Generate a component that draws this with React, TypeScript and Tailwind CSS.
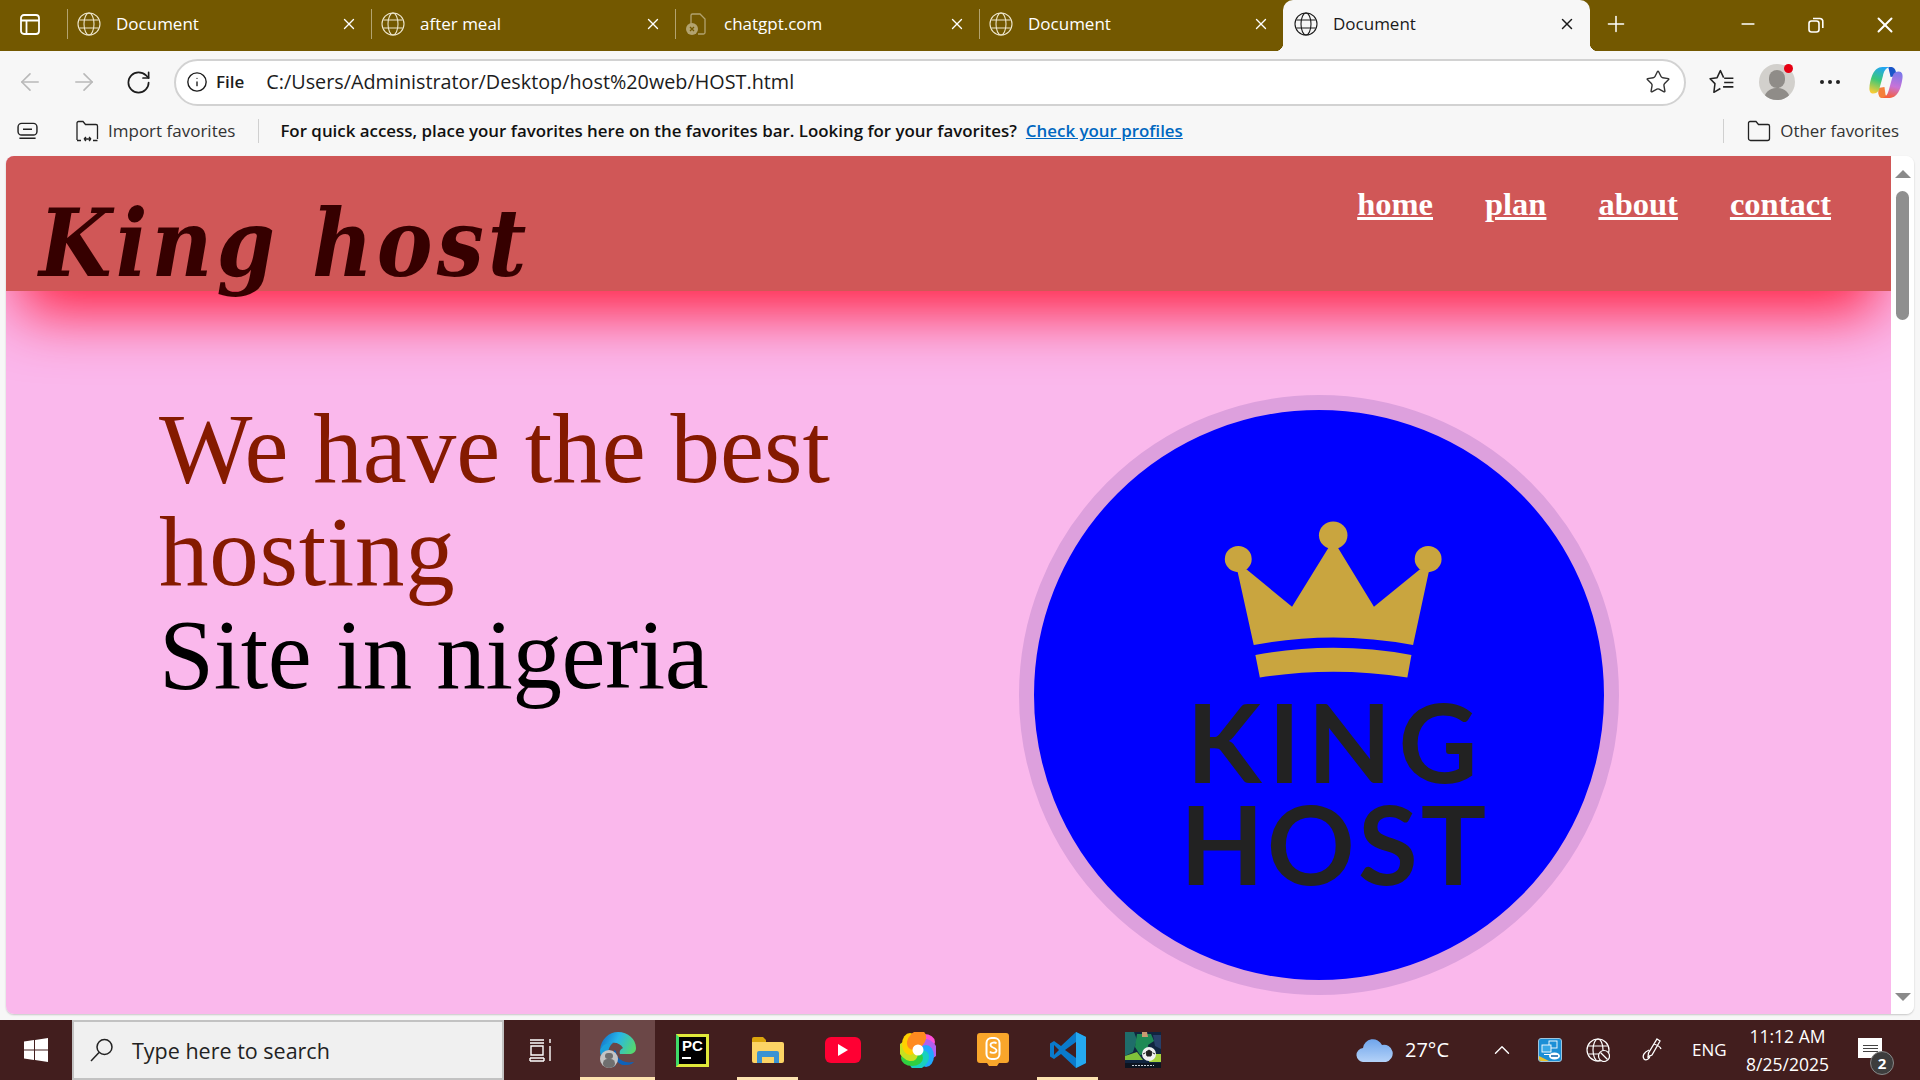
import { X, Plus, Minus, ArrowLeft, ArrowRight, RotateCw, Info, Star, ChevronUp } from "lucide-react";

const tabs = [
	{ title: "Document", icon: "globe" },
	{ title: "after meal", icon: "globe" },
	{ title: "chatgpt.com", icon: "page" },
	{ title: "Document", icon: "globe" },
];

const swirlColors = ["#ff4fd8", "#b060f0", "#20a8ff", "#18d0c0", "#30d040", "#c8e020", "#ffd000", "#ff8a20"];

function GlobeIcon({ className }: { className?: string }) {
	return (
		<svg viewBox="0 0 24 24" fill="none" stroke="currentColor" strokeWidth="1.1" className={className}>
			<circle cx="12" cy="12" r="11" />
			<ellipse cx="12" cy="12" rx="5" ry="11" />
			<path d="M2.2 8h19.6M2.2 16h19.6" />
		</svg>
	);
}

function PageIcon() {
	return (
		<svg viewBox="0 0 24 24" fill="none" className="w-6 h-6 text-[#b3a36f]" stroke="currentColor" strokeWidth="1.3">
			<path d="M6 12V3.5A1.5 1.5 0 0 1 7.5 2H15l5 5v13.5a1.5 1.5 0 0 1-1.5 1.5H13" />
			<circle cx="7" cy="17" r="6" fill="currentColor" stroke="none" />
			<path d="M5 15l4 4M9 15l-4 4" stroke="#735800" />
		</svg>
	);
}

function TabBar() {
	return (
		<div className="h-[51px] bg-[#735800] flex text-white shrink-0">
			<div className="w-[67px] flex items-center pl-5 pb-[3px] shrink-0">
				<svg viewBox="0 0 20 21" fill="none" stroke="white" strokeWidth="1.8" className="w-5 h-[21px]">
					<rect x="1" y="1" width="18" height="19" rx="3" />
					<path d="M1 6.5h18M6.5 6.5V20" />
				</svg>
			</div>
			{tabs.map((t, i) => (
				<div key={i} className="w-[304px] h-[51px] flex items-center relative pl-[10px] pb-[3px] shrink-0">
					<div className="absolute left-0 top-[9px] h-[30px] w-px bg-[#b3a36f]" />
					{t.icon === "globe" ? <GlobeIcon className="w-6 h-6 text-[#eee6cc]" /> : <PageIcon />}
					<span className="ml-[15px] text-[17px]">{t.title}</span>
					<X className="ml-auto mr-[13px] w-[18px] h-[18px]" strokeWidth={1.8} />
				</div>
			))}
			<div className="w-[307px] h-[51px] bg-[#f7f7f7] rounded-t-[10px] flex items-center pl-[11px] pb-[3px] text-[#1a1a1a] relative shrink-0">
				<div className="absolute -left-2 bottom-0 w-2 h-2 bg-[radial-gradient(circle_at_0_0,#735800_8px,#f7f7f7_8.5px)]" />
				<div className="absolute -right-2 bottom-0 w-2 h-2 bg-[radial-gradient(circle_at_100%_0,#735800_8px,#f7f7f7_8.5px)]" />
				<GlobeIcon className="w-6 h-6" />
				<span className="ml-[15px] text-[17px]">Document</span>
				<X className="ml-auto mr-[14px] w-[18px] h-[18px]" strokeWidth={2} />
			</div>
			<Plus className="ml-[13px] mt-[11px] w-[26px] h-[26px]" strokeWidth={1.4} />
			<Minus className="ml-[109px] mt-[14px] w-[20px] h-[20px]" strokeWidth={2} />
			<svg viewBox="0 0 16 16" fill="none" stroke="white" strokeWidth="1.6" className="ml-[50px] mt-[17px] w-4 h-4">
				<rect x="1" y="4" width="10" height="11" rx="2.5" />
				<path d="M5 1.5h6.5A3 3 0 0 1 14.8 5v6" />
			</svg>
			<X className="ml-[48px] mt-[12px] w-[26px] h-[26px]" strokeWidth={1.8} />
		</div>
	);
}

function CopilotIcon() {
	return (
		<svg viewBox="0 0 33 30" preserveAspectRatio="none" className="ml-[29px] w-[34px] h-[33px]">
			<defs>
				<linearGradient id="cpl" x1="0.6" y1="0" x2="0.3" y2="1">
					<stop offset="0" stopColor="#22a6f2" />
					<stop offset="0.5" stopColor="#3cc878" />
					<stop offset="1" stopColor="#f7cc35" />
				</linearGradient>
				<linearGradient id="cpr" x1="0.6" y1="0" x2="0.4" y2="1">
					<stop offset="0" stopColor="#7a78ea" />
					<stop offset="0.55" stopColor="#c873d8" />
					<stop offset="1" stopColor="#f5603a" />
				</linearGradient>
			</defs>
			<path d="M19 1h3c2 0 3.500 2 4 4l1 4-6 1-2-8z" fill="#1a56c8" />
			<path d="M9 20l6-1 1 7 1.500 3H12c-2 0-2.500-2-3-4z" fill="#f5803a" />
			<path d="M13 1H20C16 2 14.500 5 13.500 9L10 21C9 24 7 25 4 25C1 25 0 22 .5 19C1.500 12 4 1 13 1z" fill="url(#cpl)" />
			<path d="M20 29H13C17 28 18.500 25 19.500 21L23 9C24 6 26 5 29 5C32 5 33 8 32.500 11C31.500 18 29 29 20 29z" fill="url(#cpr)" />
		</svg>
	);
}

function AddressRow() {
	return (
		<div className="h-16 flex items-center bg-[#f7f7f7] shrink-0 pb-[2px] text-[#1c1c1c]">
			<ArrowLeft className="ml-4 w-7 h-7 text-[#b9b9b9]" strokeWidth={1.4} />
			<ArrowRight className="ml-[26px] w-7 h-7 text-[#b9b9b9]" strokeWidth={1.4} />
			<RotateCw className="ml-[27px] w-[27px] h-[27px]" strokeWidth={1.5} />
			<div className="ml-[22px] w-[1512px] h-[47px] bg-white rounded-full border-2 border-[#d2d2d2] flex items-center pl-[10px]">
				<Info className="w-[22px] h-[22px]" strokeWidth={1.5} />
				<span className="ml-2 text-[17px] font-semibold">File</span>
				<span className="ml-[22px] text-[19.8px]">C:/Users/Administrator/Desktop/host%20web/HOST.html</span>
				<Star className="ml-auto mr-[13px] w-[26px] h-[26px] text-[#333]" strokeWidth={1.3} />
			</div>
			<svg viewBox="0 0 24 24" fill="none" stroke="#222" strokeWidth="1.4" className="ml-[23px] w-[26px] h-[26px]">
				<path d="M13.500 8L10.500 1.500L7.500 8L1 9L5.500 13.500L4.500 21.500L10.500 18" strokeLinejoin="round" />
				<path d="M14 8.500h8.500M14 12.500h8.500M13 16.500h9.500" />
			</svg>
			<div className="ml-[24px] w-[36px] h-[36px] rounded-full bg-[#d2d0cc] relative overflow-hidden flex justify-center">
				<div className="absolute top-[6px] w-[16px] h-[18px] rounded-full bg-[#8f8c88]" />
				<div className="absolute top-[24px] w-[26px] h-[24px] rounded-full bg-[#8f8c88]" />
			</div>
			<div className="w-[9px] h-[9px] rounded-full bg-[#e60012] -ml-[11px] -mt-[28px] z-10" />
			<div className="ml-[27px] flex gap-[4px]">
				<div className="w-[4px] h-[4px] rounded-full bg-[#222]" />
				<div className="w-[4px] h-[4px] rounded-full bg-[#222]" />
				<div className="w-[4px] h-[4px] rounded-full bg-[#222]" />
			</div>
			<CopilotIcon />
		</div>
	);
}

function FavoritesBar() {
	return (
		<div className="h-[41px] flex items-center bg-[#f7f7f7] text-[17px] text-[#222] pb-[9px] shrink-0">
			<svg viewBox="0 0 24 20" fill="none" stroke="#222" strokeWidth="1.6" className="ml-4 w-[23px] h-[18px]">
				<rect x="1.500" y="1.500" width="21" height="13" rx="4" />
				<path d="M7 8h10M3 18h18" />
			</svg>
			<svg viewBox="0 0 24 24" fill="none" stroke="#222" strokeWidth="1.3" className="ml-[36px] w-6 h-6">
				<path d="M2 21V4a1.500 1.500 0 0 1 1.500-1.500H8l2.500 3H21a1.500 1.500 0 0 1 1.500 1.500v13" />
				<path d="M2 21.500h4M18 21.500h4.500M9 20h7M9 20l2-2M9 20l2 2M16 20l-2-2M16 20l-2 2" />
			</svg>
			<span className="ml-[9px] text-[#333]">Import favorites</span>
			<div className="ml-[23px] w-px h-6 bg-[#d0d0d0]" />
			<span className="ml-[21px] font-semibold text-[16.9px] text-[#111] whitespace-nowrap">For quick access, place your favorites here on the favorites bar. Looking for your favorites?</span>
			<span className="ml-[9px] text-[#0067c0] underline font-semibold text-[16.9px]">Check your profiles</span>
			<div className="ml-auto w-px h-6 bg-[#d0d0d0]" />
			<svg viewBox="0 0 24 22" fill="none" stroke="#222" strokeWidth="1.3" className="ml-[23px] w-6 h-[22px]">
				<path d="M1.500 18.500V3A1.500 1.500 0 0 1 3 1.500h6l2.500 3H21A1.500 1.500 0 0 1 22.500 6v12.500A2 2 0 0 1 20.500 20.500h-17a2 2 0 0 1-2-2z" />
			</svg>
			<span className="ml-[9px] mr-[21px] text-[16.9px] text-[#333]">Other favorites</span>
		</div>
	);
}

function KingLogo() {
	return (
		<div className="w-[600px] h-[600px] rounded-full border-[15px] border-[#dda0dd] bg-[#0000ff] flex flex-col items-center pt-[111px] pl-[28px] shrink-0 overflow-hidden">
			<svg viewBox="0 0 535 396" preserveAspectRatio="none" className="w-[218px] h-[157px] shrink-0" fill="#c9a53f">
				<circle cx="268" cy="36" r="35" />
				<circle cx="35" cy="96" r="33" />
				<circle cx="501" cy="96" r="33" />
				<path d="M33 126L55 122L167 216L256 68H280L368 216L481 122L503 126L464 313Q268 275 73 313Z" />
				<path d="M77 338Q268 302 460 338L450 395Q268 365 88 395Z" />
			</svg>
			<div className="mt-[12px] text-center text-[#222222] font-['Lato',sans-serif] font-bold text-[109px] leading-[102px]">
				<div className="tracking-[7px] pl-[5px]">KING</div>
				<div className="tracking-[3px] pl-[3px]">HOST</div>
			</div>
		</div>
	);
}

function ScrollRail() {
	return (
		<div className="w-[23px] bg-white flex flex-col items-center shrink-0 pt-[14px] pb-[13px]">
			<div className="w-0 h-0 border-l-[8px] border-r-[8px] border-b-[8px] border-l-transparent border-r-transparent border-b-[#8a8a8a]" />
			<div className="mt-[13px] w-[13px] h-[129px] rounded-full bg-[#8f8f8f]" />
			<div className="mt-auto w-0 h-0 border-l-[8px] border-r-[8px] border-t-[8px] border-l-transparent border-r-transparent border-t-[#8a8a8a]" />
		</div>
	);
}

function Page() {
	return (
		<div className="flex-1 bg-[#f7f7f7] px-[6px] pb-[6px] min-h-0">
			<div className="h-full rounded-lg overflow-hidden flex shadow-[0_1px_2px_rgba(0,0,0,0.2)]">
				<div className="flex-1 bg-[#fab8ec] font-['Liberation_Serif',serif] overflow-hidden">
					<header className="h-[135px] bg-[#d05757] relative z-10 shadow-[0_36px_60px_-14px_#ff2040] flex items-start">
						<h1 className="ml-[33px] mt-[28px] text-[#360000] font-bold italic font-['DejaVu_Serif_Condensed','DejaVu_Serif',serif] text-[93px] leading-[120px] tracking-[4px] whitespace-nowrap">King host</h1>
						<nav className="ml-auto mr-[60px] mt-[28px] flex gap-[52px] text-white font-bold text-[32.5px] leading-[40px] underline">
							<span>home</span>
							<span>plan</span>
							<span>about</span>
							<span>contact</span>
						</nav>
					</header>
					<section className="flex items-start pl-[153px] pt-[104px]">
						<div className="w-[860px] shrink-0 text-[99px] leading-[103px] text-[#851a00] pt-[2px]">
							<div>We have the best</div>
							<div className="tracking-[0.7px]">hosting</div>
							<div className="text-black tracking-[-0.4px]">Site in nigeria</div>
						</div>
						<KingLogo />
					</section>
				</div>
				<ScrollRail />
			</div>
		</div>
	);
}

function EdgeIcon() {
	return (
		<div className="relative w-9 h-9">
			<svg viewBox="0 0 36 36" className="w-9 h-9">
				<defs>
					<linearGradient id="edgeTop" x1="0" y1="0.3" x2="1" y2="0.6">
						<stop offset="0" stopColor="#1270c8" />
						<stop offset="0.45" stopColor="#27b6ea" />
						<stop offset="1" stopColor="#55d870" />
					</linearGradient>
				</defs>
				<path d="M0 18C1 7 9 0 18 0c10 0 18 7 18 16 0 4-3 6-7 6h-9c-1-3 1-5 3-6-2-4-7-6-11-5C7 12 2 14 0 18z" fill="url(#edgeTop)" />
				<path d="M0 18C2 13 7 10.500 13 11c-4 3-6 9-4 16 1 3 3 6 6 8C6 34 0 27 0 18z" fill="#1aa0dc" />
				<path d="M14 18c-1 8 4 15 11 15 4 0 7-1 9-3-5 2-9 1-12-1-4-3-6-6-6-10z" fill="#0f62b8" />
				<path d="M14 22c1 6 5 11 11 11 4 0 7-1 9-3-5 1-10 0-13-2-3-1-5-3-7-6z" fill="#0f62b8" />
			</svg>
			<div className="absolute left-0 bottom-0 w-[18px] h-[18px] rounded-full bg-[#c4c4c4] flex flex-col items-center overflow-hidden">
				<div className="w-2 h-2 mt-[3px] rounded-full bg-[#6f6f6f]" />
				<div className="w-3 h-3 rounded-full bg-[#6f6f6f]" />
			</div>
		</div>
	);
}

function PcIcon() {
	return (
		<div className="w-[33px] h-[33px] bg-black border-[3px] border-[#dfe83a] border-l-[#3fdc6a] flex flex-col pl-[3px] text-white font-bold text-[15px] leading-[17px] font-['Liberation_Sans',sans-serif]">
			<span>PC</span>
			<div className="w-[9px] h-[2px] mt-[3px] bg-white" />
		</div>
	);
}

function SwirlIcon() {
	return (
		<svg viewBox="0 0 36 36" className="w-9 h-9">
			{swirlColors.map((c, i) => (
				<ellipse key={c} cx="24" cy="10" rx="11" ry="8" fill={c} transform={`rotate(${i * 45} 18 18)`} />
			))}
			<circle cx="18" cy="18" r="5.500" fill="white" />
		</svg>
	);
}

function ScratchIcon() {
	return (
		<svg viewBox="0 0 32 34" className="w-8 h-[34px]">
			<path d="M3 0h26a3 3 0 0 1 3 3v24a3 3 0 0 1-3 3h-7l-2 3H12l-2-3H3a3 3 0 0 1-3-3V3a3 3 0 0 1 3-3z" fill="#f9a62b" />
			<rect x="9.500" y="5" width="13" height="21" rx="5" fill="none" stroke="white" strokeWidth="2" />
			<path d="M19.500 10.500c-1-1.500-6-1.500-6 1.500s6 2.500 6 5.500-5.500 3-6.500 1" fill="none" stroke="white" strokeWidth="1.800" />
		</svg>
	);
}

function GameThumb() {
	return (
		<svg viewBox="0 0 36 36" className="w-9 h-9">
			<rect width="36" height="36" fill="#10243f" />
			<path d="M0 0h9l3 8-4 12-8 4z" fill="#1f6d6a" />
			<path d="M12 2h14l3 7-6 4 1 8-9 2-5-8z" fill="#1e8a55" />
			<path d="M17 0h5l1 5h-6z" fill="#c99a72" />
			<path d="M28 3h8v14l-6-3z" fill="#27406a" />
			<path d="M0 24l12-4 6 8H0z" fill="#7fc23a" />
			<path d="M26 22h10v8H24z" fill="#a6d23e" />
			<circle cx="24" cy="22" r="7" fill="#f0f0f0" />
			<path d="M24 18l3 2-1 4h-4l-1-4zM18 22l2-1M30 22l-2-1" fill="#222" stroke="#222" />
			<rect y="31" width="36" height="5" fill="#0c1420" />
			<path d="M7 33.500h22" stroke="#c8d0d8" strokeWidth="1.200" strokeDasharray="2 1" />
		</svg>
	);
}

function IntelIcon() {
	return (
		<svg viewBox="0 0 24 24" className="w-6 h-6 shrink-0">
			<rect x="0.500" y="0.500" width="23" height="23" rx="2.500" fill="#1b8fd6" stroke="#9fc4dc" />
			<path d="M1 18l10 5H3a2 2 0 0 1-2-2z" fill="#e6c22f" />
			<rect x="11" y="3" width="8" height="7" fill="none" stroke="white" strokeWidth="0.900" />
			<rect x="4" y="7" width="9" height="7" fill="#38a8e6" stroke="white" strokeWidth="0.900" />
			<path d="M6 16.500h6" stroke="white" />
			<ellipse cx="16.500" cy="18" rx="5.500" ry="3.500" fill="white" />
			<path d="M13 18h7" stroke="#0b5fa5" strokeWidth="1.500" />
		</svg>
	);
}

function TaskSlot({ children, bar, active }: { children: React.ReactNode; bar?: boolean; active?: boolean }) {
	return (
		<div className={`w-[75px] h-[60px] flex items-center justify-center relative shrink-0 ${active ? "bg-[#6b4747]" : ""}`}>
			{children}
			{bar && <div className="absolute bottom-0 left-[7px] right-[7px] h-[3px] bg-[#fde3b0]" />}
			{active && <div className="absolute bottom-0 inset-x-0 h-[3px] bg-[#fde3b0]" />}
		</div>
	);
}

function Taskbar() {
	return (
		<div className="h-[60px] bg-[#421e1e] flex items-center text-white shrink-0 mt-0 font-['Open_Sans',sans-serif]">
			<div className="w-[72px] flex justify-center shrink-0">
				<svg viewBox="0 0 24 24" fill="white" className="w-6 h-6">
					<path d="M0 3.500l10-1.400v9.300H0zM11 2l13-2v11.400H11zM0 12.500h10v9.400L0 20.500zM11 12.500h13V24l-13-2z" />
				</svg>
			</div>
			<div className="w-[432px] h-[60px] bg-[#f0f0f0] border-[2px] border-[#c2c2c2] flex items-center pl-[16px] shrink-0">
				<svg viewBox="0 0 24 24" fill="none" stroke="#222" strokeWidth="1.5" className="w-6 h-6">
					<circle cx="14.500" cy="9" r="7.500" />
					<path d="M9 14.500L1 23" />
				</svg>
				<span className="ml-[18px] mt-[3px] text-[21.5px] text-[#222]">Type here to search</span>
			</div>
			<div className="w-[76px] flex justify-center pr-1 shrink-0">
				<svg viewBox="0 0 24 24" fill="none" stroke="white" strokeWidth="1.4" className="w-6 h-6">
					<path d="M2 2h14M2 5h14M3 8h12v9H3zM2 20h14M2 23h14M2 20v3M16 20v3M22 1v4M22 8v15" />
				</svg>
			</div>
			<TaskSlot active><EdgeIcon /></TaskSlot>
			<TaskSlot><PcIcon /></TaskSlot>
			<TaskSlot bar>
				<svg viewBox="0 0 32 26" className="w-8 h-[26px]">
					<path d="M0 2a2 2 0 0 1 2-2h9l3 3v4H0z" fill="#dba50d" />
					<path d="M0 5h30a2 2 0 0 1 2 2v17a2 2 0 0 1-2 2H2a2 2 0 0 1-2-2z" fill="#fcd465" />
					<path d="M5 26V16a2 2 0 0 1 2-2h18a2 2 0 0 1 2 2v10h-5v-6H10v6z" fill="#3a93d3" />
				</svg>
			</TaskSlot>
			<TaskSlot>
				<div className="w-9 h-[26px] rounded-md bg-[#ff0033] flex items-center justify-center">
					<div className="w-0 h-0 border-y-[6px] border-y-transparent border-l-[10px] border-l-white" />
				</div>
			</TaskSlot>
			<TaskSlot><SwirlIcon /></TaskSlot>
			<TaskSlot><ScratchIcon /></TaskSlot>
			<TaskSlot bar>
				<svg viewBox="0 0 36 36" className="w-9 h-9">
					<path d="M26 0l10 5v26l-10 5L11 22l-7 5-4-2.500v-13L4 9l7 5z" fill="#0a7acb" />
					<path d="M26 0l10 5v26l-10 5z" fill="#25a9f0" />
					<path d="M26 10L15 18l11 8z" fill="#421e1e" />
					<path d="M4 13l5 5-5 5z" fill="#421e1e" />
				</svg>
			</TaskSlot>
			<TaskSlot><GameThumb /></TaskSlot>
			{/* tray */}
			<svg viewBox="0 0 37 24" className="ml-[176px] w-[37px] h-6 shrink-0">
				<defs>
					<linearGradient id="cl" x1="0" y1="0" x2="0" y2="1">
						<stop offset="0" stopColor="#6fa5ec" />
						<stop offset="1" stopColor="#b4d2f8" />
					</linearGradient>
				</defs>
				<path d="M8 24a7 7 0 0 1-1-14 10 10 0 0 1 19-3 8.500 8.500 0 0 1 4 17z" fill="url(#cl)" />
			</svg>
			<span className="ml-[12px] w-[43px] text-[20px] whitespace-nowrap shrink-0">27°C</span>
			<ChevronUp className="ml-[41px] w-[26px] h-[26px] shrink-0" strokeWidth={1.3} />
			<div className="ml-[23px] shrink-0"><IntelIcon /></div>
			<svg viewBox="0 0 24 24" fill="none" stroke="white" strokeWidth="1.2" className="ml-6 w-6 h-6 shrink-0">
				<circle cx="12" cy="12" r="11" />
				<ellipse cx="12" cy="12" rx="5" ry="11" />
				<path d="M2.200 8h19.600M2.200 16h19.600" />
				<circle cx="18" cy="18" r="5.500" fill="#421e1e" />
				<path d="M14.500 14.500l7 7" />
			</svg>
			<svg viewBox="0 0 20 24" fill="none" stroke="white" strokeWidth="1.3" className="ml-8 w-5 h-6 shrink-0">
				<path d="M15 1l3 2-8 14-4 2 .5-4zM12 6c3 1 6 2 7 5M7 12C2 14 0 18 2 21c2 2 6 0 6-4" />
			</svg>
			<span className="ml-[30px] w-[34px] text-[17px] shrink-0">ENG</span>
			<div className="ml-[20px] w-[83px] flex flex-col items-center text-[17.5px] leading-[28px] whitespace-nowrap shrink-0">
				<span>11:12 AM</span>
				<span>8/25/2025</span>
			</div>
			<div className="ml-[29px] w-6 h-[20px] bg-white relative -mt-[4px] shrink-0 flex flex-col items-center justify-center gap-[2px]">
				<div className="w-[15px] h-px bg-[#444]" />
				<div className="w-[15px] h-px bg-[#444]" />
				<div className="w-[15px] h-px bg-[#444]" />
				<div className="absolute -right-[12px] -bottom-[17px] w-6 h-6 rounded-full bg-[#3d3d3d] border border-[#888] flex items-center justify-center text-white text-[15px] font-bold">2</div>
			</div>
		</div>
	);
}

export default function App() {
	return (
		<div className="w-[1920px] h-screen flex flex-col overflow-hidden bg-[#f7f7f7] font-['Open_Sans',sans-serif]">
			<TabBar />
			<AddressRow />
			<FavoritesBar />
			<Page />
			<Taskbar />
		</div>
	);
}
